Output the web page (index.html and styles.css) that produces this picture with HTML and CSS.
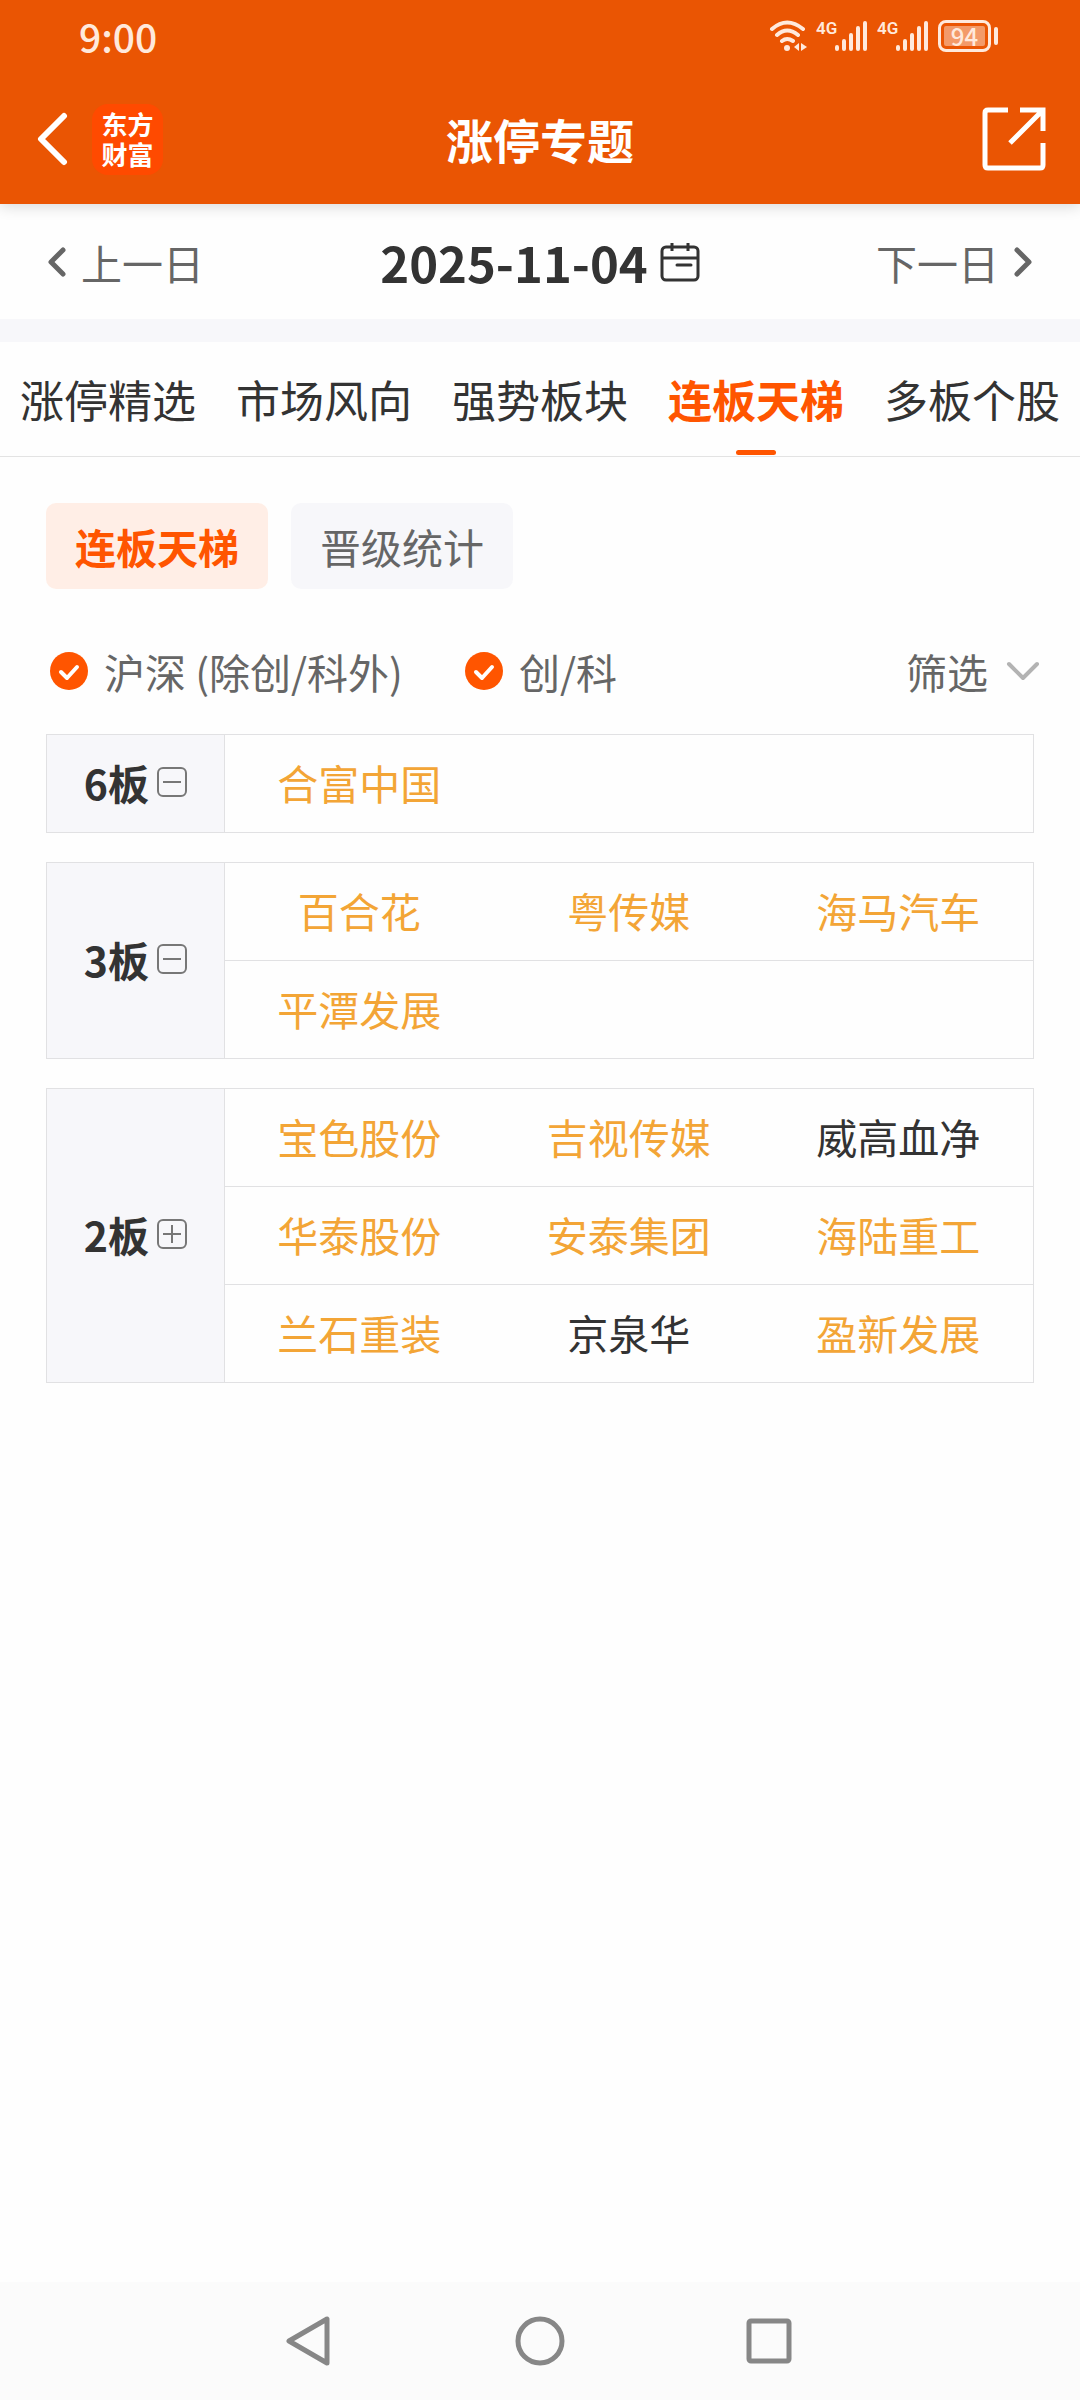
FILE: index.html
```
<!DOCTYPE html>
<html lang="zh-CN">
<head>
    <meta charset="UTF-8">
    <meta name="viewport" content="width=device-width, initial-scale=1.0">
    <title>涨停专题</title>
    <link rel="stylesheet" href="styles.css">
</head>
<body>
    <header class="top">
        <div class="status-bar">
            <span class="clock">9:00</span>
            <div class="status-icons">
                <svg class="wifi" width="38" height="32" viewBox="0 0 38 32" fill="none" stroke="currentColor" stroke-width="4" stroke-linecap="round">
                    <path d="M3 9Q18 -4 34 9M8 15Q18 6 29 15M13 21Q18 17 24 21"/>
                    <circle cx="18" cy="28" r="3" fill="currentColor" stroke="none"/>
                    <path d="M30 23v8l-5-4zM32 23v8l6-4z" fill="currentColor" stroke="none"/>
                </svg>
                <div class="signal">
                    <span class="net">4G</span>
                    <svg width="34" height="32" viewBox="0 0 34 32" stroke="currentColor" stroke-width="4" stroke-linecap="round">
                        <path d="M3 27v2M10 21v8M17 15v14M24 8v21M31 3v26"/>
                    </svg>
                </div>
                <div class="signal">
                    <span class="net">4G</span>
                    <svg width="34" height="32" viewBox="0 0 34 32" stroke="currentColor" stroke-width="4" stroke-linecap="round">
                        <path d="M3 27v2M10 21v8M17 15v14M24 8v21M31 3v26"/>
                    </svg>
                </div>
                <div class="battery"><span class="level">94</span></div>
            </div>
        </div>
        <div class="title-bar">
            <div class="title-left">
                <button class="icon-btn" type="button" aria-label="返回">
                    <svg width="34" height="54" viewBox="0 0 34 54" fill="none" stroke="currentColor" stroke-width="6" stroke-linecap="round" stroke-linejoin="round">
                        <path d="M30 4L7 27L30 50"/>
                    </svg>
                </button>
                <a class="logo" href="#"><span>东方</span><span>财富</span></a>
            </div>
            <h1>涨停专题</h1>
            <button class="icon-btn share" type="button" aria-label="分享">
                <svg width="64" height="64" viewBox="0 0 64 64" fill="none" stroke="currentColor" stroke-width="5">
                    <path d="M26 3H6Q3 3 3 6V58Q3 61 6 61H58Q61 61 61 58V36"/>
                    <path d="M38 3H61V24M61 3L28 36"/>
                </svg>
            </button>
        </div>
    </header>

    <section class="date-bar">
        <button class="day-btn" type="button">
            <svg width="18" height="30" viewBox="0 0 18 30" fill="none" stroke="currentColor" stroke-width="5" stroke-linecap="round" stroke-linejoin="round">
                <path d="M15 3L3 15L15 27"/>
            </svg>
            上一日
        </button>
        <button class="date-btn" type="button">
            2025-11-04
            <svg width="40" height="40" viewBox="0 0 40 40" fill="none" stroke="currentColor" stroke-width="3">
                <rect x="2" y="5" width="36" height="33" rx="4"/>
                <path d="M2 16H38M12 1V9M28 1V9"/>
                <path d="M17 23H31" stroke-linecap="round"/>
            </svg>
        </button>
        <button class="day-btn next" type="button">
            下一日
            <svg width="18" height="30" viewBox="0 0 18 30" fill="none" stroke="currentColor" stroke-width="5" stroke-linecap="round" stroke-linejoin="round">
                <path d="M3 3L15 15L3 27"/>
            </svg>
        </button>
    </section>

    <nav class="tabs">
        <a href="#">涨停精选</a>
        <a href="#">市场风向</a>
        <a href="#">强势板块</a>
        <a href="#" class="active">连板天梯</a>
        <a href="#">多板个股</a>
    </nav>

    <main>
        <div class="sub-tabs">
            <button type="button" class="active">连板天梯</button>
            <button type="button">晋级统计</button>
        </div>

        <form class="filters">
            <label><input type="checkbox" name="main" checked>沪深 (除创/科外)</label>
            <label><input type="checkbox" name="gem" checked>创/科</label>
            <select name="filter" aria-label="筛选">
                <option>筛选</option>
            </select>
        </form>

        <table class="ladder">
            <tr>
                <th scope="rowgroup">
                    <div class="level-name">6板
                        <button class="icon-btn" type="button" aria-label="收起">
                            <svg width="30" height="30" viewBox="0 0 30 30" fill="none" stroke="currentColor" stroke-width="2">
                                <rect x="1" y="1" width="28" height="28" rx="5"/>
                                <path d="M6 15H24"/>
                            </svg>
                        </button>
                    </div>
                </th>
                <td><a href="#">合富中国</a></td>
                <td></td>
                <td></td>
            </tr>
        </table>

        <table class="ladder">
            <tr>
                <th scope="rowgroup" rowspan="2">
                    <div class="level-name">3板
                        <button class="icon-btn" type="button" aria-label="收起">
                            <svg width="30" height="30" viewBox="0 0 30 30" fill="none" stroke="currentColor" stroke-width="2">
                                <rect x="1" y="1" width="28" height="28" rx="5"/>
                                <path d="M6 15H24"/>
                            </svg>
                        </button>
                    </div>
                </th>
                <td><a href="#">百合花</a></td>
                <td><a href="#">粤传媒</a></td>
                <td><a href="#">海马汽车</a></td>
            </tr>
            <tr>
                <td><a href="#">平潭发展</a></td>
                <td></td>
                <td></td>
            </tr>
        </table>

        <table class="ladder">
            <tr>
                <th scope="rowgroup" rowspan="3">
                    <div class="level-name">2板
                        <button class="icon-btn" type="button" aria-label="展开">
                            <svg width="30" height="30" viewBox="0 0 30 30" fill="none" stroke="currentColor" stroke-width="2">
                                <rect x="1" y="1" width="28" height="28" rx="5"/>
                                <path d="M6 15H24M15 6V24"/>
                            </svg>
                        </button>
                    </div>
                </th>
                <td><a href="#">宝色股份</a></td>
                <td><a href="#">吉视传媒</a></td>
                <td><a href="#" class="plain">威高血净</a></td>
            </tr>
            <tr>
                <td><a href="#">华泰股份</a></td>
                <td><a href="#">安泰集团</a></td>
                <td><a href="#">海陆重工</a></td>
            </tr>
            <tr>
                <td><a href="#">兰石重装</a></td>
                <td><a href="#" class="plain">京泉华</a></td>
                <td><a href="#">盈新发展</a></td>
            </tr>
        </table>
    </main>

    <footer class="nav-bar">
        <button class="icon-btn" type="button" aria-label="后退">
            <svg width="50" height="50" viewBox="0 0 50 50" fill="none" stroke="currentColor" stroke-width="5" stroke-linejoin="round">
                <path d="M42 3V47L4 25Z"/>
            </svg>
        </button>
        <button class="icon-btn" type="button" aria-label="主屏幕">
            <svg width="50" height="50" viewBox="0 0 50 50" fill="none" stroke="currentColor" stroke-width="5">
                <circle cx="25" cy="25" r="22"/>
            </svg>
        </button>
        <button class="icon-btn" type="button" aria-label="最近任务">
            <svg width="50" height="50" viewBox="0 0 50 50" fill="none" stroke="currentColor" stroke-width="5">
                <rect x="4" y="5" width="40" height="40" rx="2"/>
            </svg>
        </button>
    </footer>
</body>
</html>
```
FILE: styles.css
```
* {
    box-sizing: border-box;
}
body {
    display: flex;
    flex-direction: column;
    min-height: 100vh;
    margin: 0;
    background-color: #fefefe;
    color: #333;
    font-family: "Noto Sans CJK SC", sans-serif;
    font-size: 41px;
    line-height: 60px;
}
button, select {
    padding: 0;
    border: none;
    background: none;
    color: inherit;
    font: inherit;
    cursor: pointer;
}
a {
    color: inherit;
    text-decoration: none;
}
svg {
    display: block;
    flex: none;
}
.icon-btn {
    display: flex;
}

/* header */
.top {
    background-color: #ea5503;
    color: #fff;
    box-shadow: 0 2px 14px rgba(0, 0, 0, 0.16);
}
.status-bar {
    display: flex;
    justify-content: space-between;
    align-items: center;
    height: 72px;
    padding: 0 82px 0 79px;
    color: #ffe9dc;
}
.clock {
    font-size: 39px;
    font-weight: 500;
}
.status-icons {
    display: flex;
    align-items: center;
    gap: 9px;
}
.signal {
    display: flex;
    height: 32px;
}
.net {
    width: 18px;
    font-family: Roboto, sans-serif;
    font-size: 17px;
    font-weight: 600;
    line-height: 16px;
}
.battery {
    display: flex;
    align-items: center;
    gap: 3px;
}
.battery::after {
    content: "";
    width: 4px;
    height: 18px;
    border-radius: 2px;
    background-color: currentColor;
}
.level {
    width: 53px;
    height: 32px;
    padding: 3px;
    border: 3px solid currentColor;
    border-radius: 8px;
    background: #f39a69 content-box;
    font-size: 24px;
    font-weight: 500;
    line-height: 20px;
    text-align: center;
}
.title-bar {
    display: grid;
    grid-template-columns: 1fr auto 1fr;
    align-items: center;
    height: 132px;
    padding: 2px 34px 0;
}
.title-left {
    display: flex;
    align-items: center;
    gap: 24px;
}
.logo {
    display: flex;
    flex-direction: column;
    align-items: center;
    justify-content: center;
    width: 71px;
    height: 71px;
    border-radius: 16px;
    background-color: #ff4a00;
    font-size: 26px;
    font-weight: 700;
    line-height: 30px;
}
h1 {
    margin: 0;
    font-size: 47px;
    font-weight: 700;
}
.share {
    justify-self: end;
}

/* date switcher */
.date-bar {
    display: grid;
    grid-template-columns: 1fr auto 1fr;
    align-items: center;
    height: 138px;
    padding: 0 48px;
    border-bottom: 23px solid #f7f7fa;
}
.day-btn {
    display: flex;
    align-items: center;
    gap: 15px;
    color: #666;
}
.next {
    justify-self: end;
}
.date-btn {
    display: flex;
    align-items: center;
    gap: 12px;
    font-size: 49px;
    font-weight: 700;
}

/* tabs */
.tabs {
    display: flex;
    justify-content: space-between;
    padding: 0 20px;
    border-bottom: 1px solid #e3e3e3;
    font-size: 44px;
    line-height: 114px;
}
.tabs a {
    position: relative;
}
.tabs .active {
    color: #ff5500;
    font-weight: 700;
}
.tabs .active::after {
    content: "";
    position: absolute;
    bottom: 1px;
    left: 50%;
    width: 40px;
    height: 5px;
    margin-left: -20px;
    border-radius: 3px;
    background-color: #ff5500;
}

main {
    flex: 1;
    padding: 46px 46px 0;
}
.sub-tabs {
    display: flex;
    gap: 23px;
}
.sub-tabs button {
    height: 86px;
    padding: 0 29px;
    border-radius: 10px;
    background-color: #f7f7fa;
    color: #666;
}
.sub-tabs .active {
    background-color: #ffeee6;
    color: #ff5500;
    font-weight: 700;
}

.filters {
    display: flex;
    align-items: center;
    gap: 58px;
    height: 145px;
    padding-top: 18px;
    color: #666;
}
.filters label {
    display: flex;
    align-items: center;
    gap: 16px;
}
.filters input {
    appearance: none;
    width: 38px;
    height: 38px;
    margin: 0 0 0 4px;
    border: 2px solid #ccc;
    border-radius: 50%;
}
.filters input:checked {
    border: none;
    background: #ff5500 url("data:image/svg+xml,%3Csvg xmlns='http://www.w3.org/2000/svg' viewBox='0 0 38 38' fill='none' stroke='white' stroke-width='4' stroke-linecap='round' stroke-linejoin='round'%3E%3Cpath d='M11 20L17 26L27 15'/%3E%3C/svg%3E");
}
.filters select {
    appearance: none;
    margin: 0 -6px 0 auto;
    padding-right: 52px;
    background: url("data:image/svg+xml,%3Csvg xmlns='http://www.w3.org/2000/svg' width='34' height='20' fill='none' stroke='%23b3b3b3' stroke-width='4' stroke-linecap='round' stroke-linejoin='round'%3E%3Cpath d='M3 3L17 17L31 3'/%3E%3C/svg%3E") no-repeat right center;
}

/* ladder tables */
.ladder {
    width: 100%;
    margin-bottom: 29px;
    border-collapse: collapse;
    table-layout: fixed;
}
.ladder th,
.ladder td {
    height: 98px;
    padding: 0 0 3px;
    border: 1px solid #e1e1e3;
    text-align: center;
}
.ladder th {
    width: 18%;
    background-color: #f7f7fa;
    font-weight: 700;
}
.ladder td {
    border-width: 1px 0;
    color: #f3a536;
}
.ladder td:last-child {
    border-right-width: 1px;
}
.ladder .plain {
    color: #333;
}
.level-name {
    display: flex;
    align-items: center;
    justify-content: center;
    gap: 8px;
}
.level-name .icon-btn {
    color: #777;
}

/* system navigation */
.nav-bar {
    display: flex;
    justify-content: center;
    align-items: center;
    gap: 180px;
    height: 118px;
    background-color: #fbfbfb;
    color: #878787;
}
```
